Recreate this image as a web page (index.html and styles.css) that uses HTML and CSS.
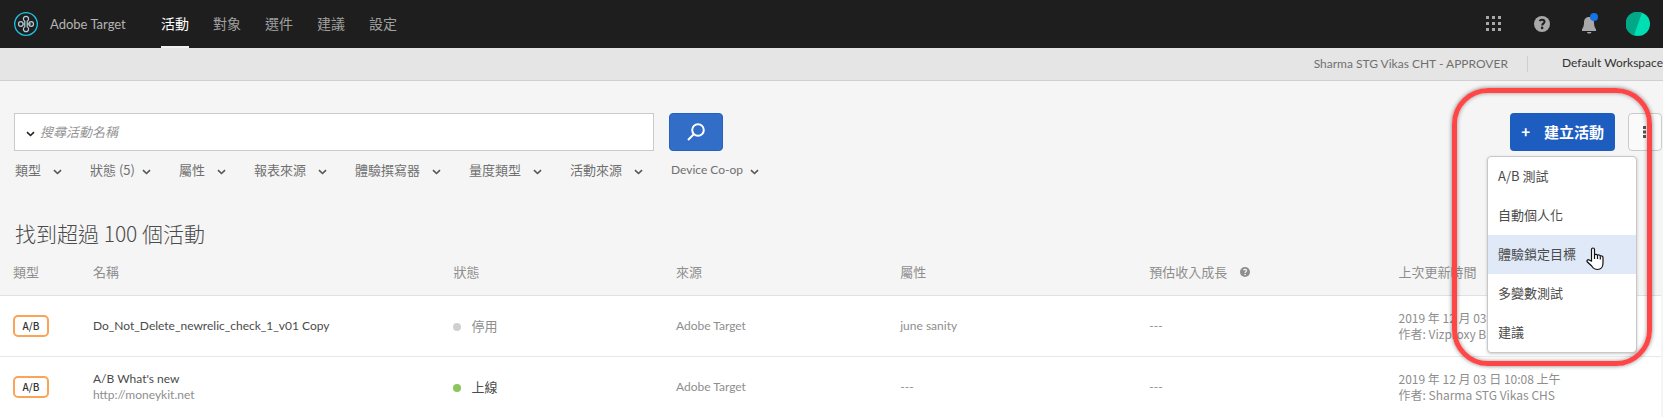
FILE: index.html
```html
<!DOCTYPE html>
<html lang="zh-Hant">
<head>
<meta charset="utf-8">
<title>Adobe Target</title>
<link rel="stylesheet" href="styles.css">
</head>
<body>
<svg class="defs" width="0" height="0" aria-hidden="true">
  <symbol id="chevron" viewBox="0 0 9 6"><path d="M1 1.2 4.5 4.5 8 1.2" fill="none" stroke="currentColor" stroke-width="1.600"/></symbol>
  <symbol id="help" viewBox="0 0 16 16"><circle cx="8" cy="8" r="8" fill="currentColor"/><path d="M5.6 5.2C6 4.200 6.800 3.700 8 3.700c1.500 0 2.500.8 2.500 2 0 1.600-2.300 1.800-2.300 3.700" fill="none" stroke="var(--mark)" stroke-width="2"/><circle cx="8.100" cy="11.900" r="1.300" fill="var(--mark)"/></symbol>
</svg>

<header class="topbar">
  <svg class="logo" viewBox="0 0 24 24" aria-hidden="true">
    <circle cx="12" cy="12" r="11.300" fill="none" stroke="#1cc4e4" stroke-width="1.300"/>
    <g fill="none" stroke="#b4cdd8" stroke-width="1.200"><path d="M10.800 9.200a2.600 2.600 0 1 1 2.400 0v5.600a2.600 2.600 0 1 1-2.400 0z"/><circle cx="6.800" cy="12" r="2.300"/><circle cx="17.200" cy="12" r="2.300"/><path d="M9.100 12h1.700M13.200 12h4"/></g>
  </svg>
  <span class="brand latin">Adobe Target</span>
  <nav class="nav">
    <a class="nav-link active" href="#">活動</a>
    <a class="nav-link" href="#">對象</a>
    <a class="nav-link" href="#">選件</a>
    <a class="nav-link" href="#">建議</a>
    <a class="nav-link" href="#">設定</a>
  </nav>
  <div class="tools">
    <button class="icon-btn" aria-label="Apps"><svg width="16" height="16" viewBox="0 0 16 16" fill="#a8a8a8"><path d="M0 0h3v3H0zM6 0h3v3H6zM12 0h3v3h-3zM0 6h3v3H0zM6 6h3v3H6zM12 6h3v3h-3zM0 12h3v3H0zM6 12h3v3H6zM12 12h3v3h-3z"/></svg></button>
    <button class="icon-btn" aria-label="Help"><svg class="help-top" width="16" height="16"><use href="#help"/></svg></button>
    <button class="icon-btn" aria-label="Notifications"><svg width="18" height="22" viewBox="0 0 18 22"><path d="M7 4c-3 .6-4 2.800-4 5.500 0 4.500-1.500 5.500-2 7V18h14v-1.500c-.5-1.500-2-2.500-2-7C13 6.800 11.500 4.600 9 4zM6 19h4.500c-.4 2-4.100 2-4.500 0z" fill="#a8a8a8"/><circle cx="13" cy="4" r="4" fill="#1473e6"/></svg></button>
    <button class="icon-btn" aria-label="Account"><svg width="24" height="24" viewBox="0 0 24 24"><circle cx="12" cy="12" r="12" fill="#00dfb4"/><path d="M16 .7A12 12 0 1 0 8 23.300z" fill="#00a887"/></svg></button>
  </div>
</header>

<div class="workspace latin">
  <span class="org">Sharma STG Vikas CHT - APPROVER</span>
  <a class="space" href="#">Default Workspace</a>
</div>

<main class="page">
  <div class="actions">
    <form class="search">
      <div class="search-box">
        <svg class="chev dark" aria-hidden="true"><use href="#chevron"/></svg>
        <input class="search-input" type="text" placeholder="搜尋活動名稱" aria-label="搜尋活動名稱">
      </div>
      <button class="search-btn" type="button" aria-label="搜尋"><svg width="18" height="18" viewBox="0 0 18 18" fill="none" stroke="#fff" stroke-width="2"><circle cx="11" cy="7" r="5.800"/><path d="M7 11 1 17"/></svg></button>
    </form>
    <div class="create-wrap">
      <button class="create"><span class="plus">+</span>建立活動</button>
      <ul class="menu">
        <li><button class="menu-item">A/B 測試</button></li>
        <li><button class="menu-item">自動個人化</button></li>
        <li><button class="menu-item hover">體驗鎖定目標</button></li>
        <li><button class="menu-item">多變數測試</button></li>
        <li><button class="menu-item">建議</button></li>
      </ul>
      <svg class="cursor" viewBox="0 0 18 24" aria-hidden="true"><path d="M5.500 14V2.500a1.500 1.500 0 0 1 3 0V8c.5-1 2.700-.9 3 .4.800-.8 2.500-.5 2.800.7.900-.6 2.700 0 2.700 1.600V16c0 3.500-2 6.500-5.500 6.500-3.200 0-4.500-1.500-5.800-3.500L1.200 14.800c-.8-1.500.9-2.600 2-1.700z" fill="#fff" stroke="#111" stroke-width="1.200"/><path d="M8.500 8v4M11.500 8.500V12M14.300 9.500V12.500" stroke="#111" stroke-width="1.200"/></svg>
      <div class="callout"></div>
    </div>
    <button class="more" aria-label="More"><svg width="4" height="12" viewBox="0 0 4 12" fill="#555"><path d="M0 0h3v3H0zM0 4.500h3v3H0zM0 9h3v3H0z"/></svg></button>
  </div>

  <div class="filters">
    <button class="filter">類型<svg class="chev"><use href="#chevron"/></svg></button>
    <button class="filter">狀態 (5)<svg class="chev near"><use href="#chevron"/></svg></button>
    <button class="filter">屬性<svg class="chev"><use href="#chevron"/></svg></button>
    <button class="filter">報表來源<svg class="chev"><use href="#chevron"/></svg></button>
    <button class="filter">體驗撰寫器<svg class="chev"><use href="#chevron"/></svg></button>
    <button class="filter">量度類型<svg class="chev"><use href="#chevron"/></svg></button>
    <button class="filter">活動來源<svg class="chev"><use href="#chevron"/></svg></button>
    <button class="filter latin">Device Co-op<svg class="chev near"><use href="#chevron"/></svg></button>
  </div>

  <h1 class="title">找到超過 100 個活動</h1>

  <table class="list">
    <colgroup><col class="c-type"><col class="c-name"><col class="c-status"><col class="c-source"><col class="c-prop"><col class="c-lift"><col></colgroup>
    <thead>
      <tr><th>類型</th><th>名稱</th><th>狀態</th><th>來源</th><th>屬性</th><th>預估收入成長<svg class="help-th" aria-hidden="true"><use href="#help"/></svg></th><th>上次更新時間</th></tr>
    </thead>
    <tbody>
      <tr>
        <td><span class="badge">A/B</span></td>
        <td class="strong latin">Do_Not_Delete_newrelic_check_1_v01 Copy</td>
        <td><span class="dot"></span>停用</td>
        <td class="latin">Adobe Target</td><td class="latin">june sanity</td><td class="latin">---</td>
        <td class="updated">2019 年 12 月 03<br>作者: Vizproxy B</td>
      </tr>
      <tr>
        <td><span class="badge">A/B</span></td>
        <td class="latin"><span class="strong">A/B What's new</span><br>http://moneykit.net</td>
        <td class="strong"><span class="dot live"></span>上線</td>
        <td class="latin">Adobe Target</td><td class="latin">---</td><td class="latin">---</td>
        <td class="updated">2019 年 12 月 03 日 10:08 上午<br>作者: Sharma STG Vikas CHS</td>
      </tr>
    </tbody>
  </table>
</main>
</body>
</html>
```
FILE: styles.css
```css
* { box-sizing: border-box; }
body {
  margin: 0;
  background: #f5f5f5;
  color: #707070;
  font: 13px/16px "Noto Sans CJK TC", "Open Sans", sans-serif;
  overflow: hidden;
}
button, input { font: inherit; color: inherit; }
button { margin: 0; padding: 0; border: 0; background: none; cursor: pointer; }
a { color: inherit; text-decoration: none; }
.defs { position: absolute; }
.latin { font-family: Lato, "Noto Sans CJK TC", sans-serif; font-size: 12px; }

.topbar {
  display: flex;
  align-items: center;
  height: 48px;
  padding: 0 13px 0 14px;
  background: #1e1e1e;
}
.logo { width: 24px; height: 24px; }
.brand { margin-left: 12px; width: 111px; color: #b4b4b4; font-size: 13px; }
.nav { display: flex; gap: 24px; align-self: stretch; }
.nav-link {
  display: flex;
  align-items: center;
  border-bottom: 2px solid transparent;
  font-size: 14px;
  color: #a0a0a0;
}
.nav-link.active { color: #fff; border-bottom-color: #f0f0f0; }
.tools { display: flex; align-items: center; gap: 24px; margin-left: auto; }
.icon-btn { display: grid; place-items: center; width: 24px; height: 24px; }
.help-top { --mark: #1e1e1e; color: #a8a8a8; }

.workspace {
  display: flex;
  justify-content: flex-end;
  align-items: center;
  height: 33px;
  border-bottom: 1px solid #d0d0d0;
  background: #e5e5e5;
}
.org { padding-right: 19px; border-right: 1px solid #cfcfcf; }
.space { padding: 0 0 3px 34px; color: #323232; }

.page { padding-top: 32px; }
.actions { display: flex; padding: 0 1px 0 14px; }
.search { display: flex; flex: 0 1 709px; gap: 15px; }
.search-box {
  display: flex;
  align-items: center;
  flex: 1;
  height: 38px;
  padding-left: 11px;
  border: 1px solid #cbcbcb;
  background: #fff;
}
.chev { width: 9px; height: 6px; margin: 3px 0 0 12px; color: #555; }
.chev.near { margin-left: 7px; }
.chev.dark { margin-left: 0; color: #222; }
.search-input { flex: 1; margin-left: 5px; padding: 0; border: 0; outline: 0; background: none; }
.search-input::placeholder { color: #959595; font-style: italic; opacity: 1; }
.search-btn {
  display: grid;
  place-items: center;
  flex: none;
  width: 54px;
  height: 38px;
  border: 1px solid #2462bd;
  border-radius: 4px;
  background: #326ec8;
}
.create-wrap { position: relative; margin-left: auto; }
.create {
  display: flex;
  align-items: center;
  gap: 14px;
  height: 38px;
  padding: 0 11px 1px;
  border-radius: 4px;
  background: #1d5dbf;
  color: #fff;
  font-size: 15px;
  font-weight: 700;
}
.menu {
  position: absolute;
  top: 43px;
  right: -22px;
  width: 150px;
  margin: 0;
  padding: 0;
  border: 1px solid #c8c8c8;
  border-radius: 4px;
  background: #fff;
  box-shadow: 0 1px 3px rgba(0, 0, 0, .2);
  list-style: none;
  z-index: 1;
}
.menu-item { display: block; width: 100%; height: 39px; padding: 0 0 2px 10px; text-align: left; color: #4b4b4b; }
.menu-item.hover { background: #dfe9f8; }
.cursor { position: absolute; z-index: 2; top: 134px; right: 11px; width: 18px; height: 24px; }
.callout {
  position: absolute;
  z-index: 3;
  top: -25px;
  right: -37px;
  width: 200px;
  height: 278px;
  border: 5px solid #ff4545;
  border-radius: 36px;
  box-shadow: 0 0 4px rgba(0, 0, 0, .5), inset 0 0 4px rgba(0, 0, 0, .4);
  pointer-events: none;
}
.more {
  display: grid;
  place-items: center;
  width: 34px;
  height: 38px;
  margin-left: 13px;
  border: 1px solid #cbcbcb;
  border-radius: 4px;
  background: #fafafa;
}

.filters { display: flex; gap: 28px; padding: 11px 15px 0; }
.filter { display: flex; align-items: center; white-space: nowrap; }

.title { margin: 38px 0 0 15px; font-size: 21px; line-height: 34px; font-weight: 300; color: #4b4b4b; }

.list { width: calc(100% - 2px); border-collapse: collapse; table-layout: fixed; text-align: left; color: #8e8e8e; }
.c-type { width: 93px; }
.c-name { width: 21.7%; }
.c-status { width: 13.4%; }
.c-source { width: 13.5%; }
.c-prop, .c-lift { width: 15%; }
.list th { height: 45px; padding: 0; font-weight: 400; border-bottom: 1px solid #e1e1e1; }
.list td { height: 61px; padding: 0; border-bottom: 1px solid #e8e8e8; background: #fff; white-space: nowrap; }
.list th:first-child, .list td:first-child { padding-left: 13px; }
.list .strong { color: #4b4b4b; }
.list .updated { font-size: 12px; }
.help-th { --mark: #f5f5f5; width: 10px; height: 10px; margin-left: 13px; }
.badge {
  display: inline-block;
  width: 36px;
  padding: 1px 0;
  border: 2px solid #f9a456;
  border-radius: 5px;
  text-align: center;
  font-size: 10px;
  font-weight: 500;
  color: #323232;
}
.dot { display: inline-block; width: 8px; height: 8px; margin-right: 10px; border-radius: 50%; background: #d0d0d0; }
.dot.live { background: #8cc55c; }
```
